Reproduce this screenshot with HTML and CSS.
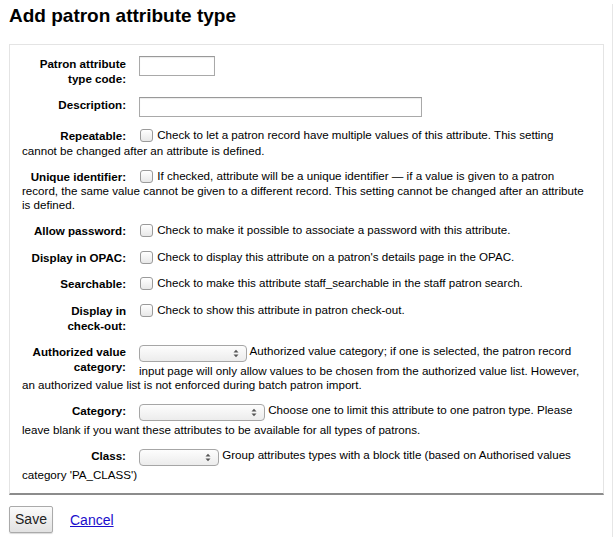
FILE: index.html
```html
<!DOCTYPE html>
<html>
<head>
<meta charset="utf-8">
<link rel="stylesheet" href="styles.css">
</head>
<body>
<div class="page">
  <h1>Add patron attribute type</h1>
  <fieldset class="rows">
    <ol>
      <li><label class="lbl">Patron attribute type code:</label><input type="text" class="txt code"></li>
      <li><label class="lbl">Description:</label><input type="text" class="txt desc"></li>
      <li><label class="lbl">Repeatable:</label><input type="checkbox" class="cb"> Check to let a patron record have multiple values of this attribute. This setting cannot be changed after an attribute is defined.</li>
      <li><label class="lbl">Unique identifier:</label><input type="checkbox" class="cb"> If checked, attribute will be a unique identifier — if a value is given to a patron record, the same value cannot be given to a different record. This setting cannot be changed after an attribute is defined.</li>
      <li><label class="lbl">Allow password:</label><input type="checkbox" class="cb"> Check to make it possible to associate a password with this attribute.</li>
      <li><label class="lbl">Display in OPAC:</label><input type="checkbox" class="cb"> Check to display this attribute on a patron's details page in the OPAC.</li>
      <li><label class="lbl">Searchable:</label><input type="checkbox" class="cb"> Check to make this attribute staff_searchable in the staff patron search.</li>
      <li><label class="lbl">Display in <span class="nw">check-out:</span></label><input type="checkbox" class="cb"> Check to show this attribute in patron check-out.</li>
      <li><label class="lbl">Authorized value category:</label><span class="sel sel-auth"><svg class="arr" width="6" height="9" viewBox="0 0 6 9"><path d="M0.5 3.5 L3 0.8 L5.5 3.5 Z M0.5 5.5 L3 8.2 L5.5 5.5 Z" fill="#555"/></svg></span> Authorized value category; if one is selected, the patron record input page will only allow values to be chosen from the authorized value list. However, an authorized value list is not enforced during batch patron import.</li>
      <li><label class="lbl">Category:</label><span class="sel sel-cat"><svg class="arr" width="6" height="9" viewBox="0 0 6 9"><path d="M0.5 3.5 L3 0.8 L5.5 3.5 Z M0.5 5.5 L3 8.2 L5.5 5.5 Z" fill="#555"/></svg></span> Choose one to limit this attribute to one patron type. Please leave blank if you want these attributes to be available for all types of patrons.</li>
      <li><label class="lbl">Class:</label><span class="sel sel-class"><svg class="arr" width="6" height="9" viewBox="0 0 6 9"><path d="M0.5 3.5 L3 0.8 L5.5 3.5 Z M0.5 5.5 L3 8.2 L5.5 5.5 Z" fill="#555"/></svg></span> Group attributes types with a block title (based on Authorised values category 'PA_CLASS')</li>
    </ol>
  </fieldset>
  <div class="actions">
    <button class="btn">Save</button>
    <a href="#" class="cancel">Cancel</a>
  </div>
</div>
</body>
</html>
```
FILE: styles.css
```css
html, body {
  margin: 0;
  padding: 0;
  background: #fff;
}
body {
  font-family: "Liberation Sans", Arial, Helvetica, sans-serif;
  font-size: 11.6px;
  color: #000;
}
.page {
  width: 595px;
  min-height: 537px;
  padding: 0 8px 0 9px;
  border-right: 1px solid #e6e6e6;
  box-sizing: content-box;
}
h1 {
  font-size: 19px;
  line-height: 24px;
  font-weight: bold;
  margin: 4px 0 16px 0;
}
fieldset.rows {
  margin: 0;
  padding: 0;
  border: 1px solid #e4e4e4;
  border-bottom: 2px solid #8c8c8c;
  min-width: 0;
}
fieldset.rows ol {
  list-style: none;
  margin: 0;
  padding: 11px 14px 0 12px;
}
fieldset.rows li {
  display: flow-root;
  line-height: 14px;
  padding-bottom: 11px;
}
.lbl {
  float: left;
  width: 104px;
  margin-right: 13px;
  text-align: right;
  font-weight: bold;
  line-height: 15px;
}
.nw {
  white-space: nowrap;
}
.txt {
  box-sizing: border-box;
  height: 20px;
  margin: 0;
  padding: 1px 3px;
  border: 1px solid #a9a9a9;
  border-top-color: #999;
  box-shadow: inset 0 1px 1px rgba(0,0,0,0.08);
  font: inherit;
  vertical-align: top;
}
.code { width: 76px; }
.desc { width: 283px; }
.cb {
  -webkit-appearance: none;
  appearance: none;
  box-sizing: border-box;
  width: 13px;
  height: 13px;
  margin: 1px 1px 1.5px 1px;
  border: 1px solid #9a9a9a;
  border-radius: 3px;
  background: linear-gradient(#fff, #e8e8e8);
  vertical-align: top;
}
.sel {
  position: relative;
  display: inline-block;
  box-sizing: border-box;
  height: 17px;
  margin: 1px 0 2px 0;
  border: 1px solid #a6a6a6;
  border-radius: 4px;
  background: linear-gradient(#fdfdfd, #ececec);
  vertical-align: top;
}
.sel-auth { width: 108px; }
.sel-cat { width: 126px; }
.sel-class { width: 80px; }
.arr {
  position: absolute;
  right: 7px;
  top: 3px;
}
.actions {
  display: flex;
  align-items: center;
  gap: 17px;
  padding-top: 11px;
}
.btn {
  box-sizing: border-box;
  width: 44px;
  height: 27px;
  padding: 0;
  font-family: "Liberation Sans", Arial, sans-serif;
  font-size: 14px;
  color: #222;
  border: 1px solid #aaa;
  border-radius: 2px;
  background: linear-gradient(#fbfbfb, #e2e2e2);
  box-shadow: 0 1px 1px rgba(0,0,0,0.15);
}
.cancel {
  font-size: 14px;
  color: #1a0dcc;
  text-decoration: underline;
  margin-top: 2px;
}
```
